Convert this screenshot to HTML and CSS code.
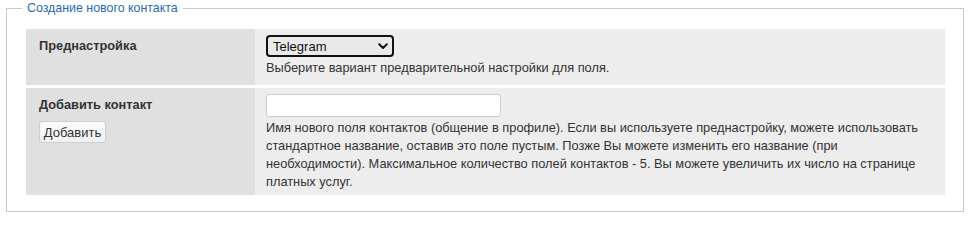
FILE: index.html
```html
<!DOCTYPE html>
<html lang="ru">
<head>
<meta charset="utf-8">
<title>Создание нового контакта</title>
<link rel="stylesheet" href="styles.css">
</head>
<body>
<fieldset class="box">
  <legend class="box-title">Создание нового контакта</legend>
  <div class="form-grid">
    <div class="label-cell"><span class="label">Преднастройка</span></div>
    <div class="field-cell">
      <div class="select-wrap">
        <select class="preset">
          <option>Telegram</option>
        </select>
        <svg class="chevron" width="10" height="7" viewBox="0 0 10 7" aria-hidden="true"><path d="M1.2 1.2 L5 5 L8.8 1.2" fill="none" stroke="#111" stroke-width="2" stroke-linecap="round" stroke-linejoin="round"/></svg>
      </div>
      <div class="hint">Выберите вариант предварительной настройки для поля.</div>
    </div>

    <div class="label-cell">
      <span class="label">Добавить контакт</span>
      <button class="btn" type="button">Добавить</button>
    </div>
    <div class="field-cell">
      <input class="text-input" type="text">
      <div class="hint">Имя нового поля контактов (общение в профиле). Если вы используете преднастройку, можете использовать стандартное название, оставив это поле пустым. Позже Вы можете изменить его название (при необходимости). Максимальное количество полей контактов - 5. Вы можете увеличить их число на странице платных услуг.</div>
    </div>
  </div>
</fieldset>
</body>
</html>
```

FILE: styles.css
```css
html, body {
  margin: 0;
  padding: 0;
  background: #ffffff;
}

body {
  font-family: "Liberation Sans", Arial, sans-serif;
  font-size: 12.8px;
  color: #333333;
  width: 972px;
}

.box {
  margin: 0 8px 0 6px;
  padding: 12px 18px 16px 19px;
  border: 1px solid #c9c9c9;
  min-width: 0;
}

.box-title {
  font-size: 12.4px;
  line-height: 17px;
  color: #1f6cb5;
  padding: 0 5px;
  margin-left: -4px;
}

.form-grid {
  display: grid;
  grid-template-columns: 229px 1fr;
  grid-auto-rows: minmax(56px, auto);
  row-gap: 3px;
}

.label-cell {
  background: #dfe0df;
  padding: 8px 13px;
  display: flex;
  flex-direction: column;
  align-items: flex-start;
}

.label {
  font-weight: bold;
  line-height: 18px;
  color: #333333;
}

.field-cell {
  background: #ededed;
  padding: 6px 11px 4px 11px;
  display: flex;
  flex-direction: column;
  align-items: flex-start;
}

.select-wrap {
  position: relative;
  display: inline-flex;
}

.preset {
  appearance: none;
  -webkit-appearance: none;
  width: 128px;
  height: 22px;
  box-sizing: border-box;
  border: 2px solid #111111;
  border-radius: 4px;
  background: #e9e9e9;
  font-family: "Liberation Sans", Arial, sans-serif;
  font-size: 13px;
  color: #111111;
  padding: 0 0 0 5px;
  margin: 0;
  outline: none;
}

.chevron {
  position: absolute;
  right: 6px;
  top: 8px;
  pointer-events: none;
}

.hint {
  line-height: 18px;
  margin-top: 2px;
  color: #333333;
}

.text-input {
  width: 235px;
  height: 23px;
  box-sizing: border-box;
  border: 1px solid #cccccc;
  border-radius: 3px;
  background: #ffffff;
  margin: 0;
  padding: 2px 5px;
  font-family: "Liberation Sans", Arial, sans-serif;
  font-size: 12.8px;
}

.btn {
  margin-top: 7px;
  width: 67px;
  height: 22px;
  box-sizing: border-box;
  border: 1px solid #cfcfcf;
  border-radius: 3px;
  background: linear-gradient(#fbfbfb, #f1f1f1);
  font-family: "Liberation Sans", Arial, sans-serif;
  font-size: 13px;
  color: #333333;
  padding: 0;
}
```
